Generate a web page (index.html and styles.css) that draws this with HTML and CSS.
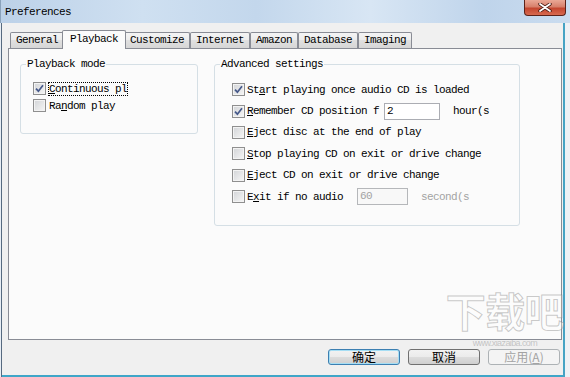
FILE: index.html
```html
<!DOCTYPE html>
<html lang="en">
<head>
  <meta charset="UTF-8" />
  <title>Preferences</title>
  <link rel="stylesheet" href="styles.css">
</head>
<body>
  <div class="window">
    <div class="titlebar">
      <span class="title">Preferences</span>
      <span class="close">
        <svg width="14" height="9" viewBox="0 0 14 9">
          <path d="M2 1 L12 8 M12 1 L2 8" stroke="#4a1a12" stroke-width="3.4" stroke-linecap="round"/>
          <path d="M2 1 L12 8 M12 1 L2 8" stroke="#fff" stroke-width="1.8" stroke-linecap="round"/>
        </svg>
      </span>
    </div>

    <div class="client">
      <div class="tabs">
        <span class="tab">General</span>
        <span class="tab active">Playback</span>
        <span class="tab">Customize</span>
        <span class="tab">Internet</span>
        <span class="tab">Amazon</span>
        <span class="tab">Database</span>
        <span class="tab">Imaging</span>
      </div>

      <div class="panel">
        <fieldset class="group mode">
          <legend>Playback mode</legend>
          <div class="row">
            <span class="cb on"><svg width="9" height="9" viewBox="0 0 9 9"><path d="M1 4.6 L3.4 7.2 L8 1.2" fill="none" stroke="#46598a" stroke-width="1.7"/></svg></span>
            <span class="lbl focus"><u>C</u>ontinuous pl</span>
          </div>
          <div class="row">
            <span class="cb"></span>
            <span class="lbl">Ra<u>n</u>dom play</span>
          </div>
        </fieldset>

        <fieldset class="group advanced">
          <legend>Advanced settings</legend>
          <div class="row">
            <span class="cb on"><svg width="9" height="9" viewBox="0 0 9 9"><path d="M1 4.6 L3.4 7.2 L8 1.2" fill="none" stroke="#46598a" stroke-width="1.7"/></svg></span>
            <span class="lbl">St<u>a</u>rt playing once audio CD is loaded</span>
          </div>
          <div class="row">
            <span class="cb on"><svg width="9" height="9" viewBox="0 0 9 9"><path d="M1 4.6 L3.4 7.2 L8 1.2" fill="none" stroke="#46598a" stroke-width="1.7"/></svg></span>
            <span class="lbl"><u>R</u>emember CD position f</span>
            <span class="field hours">2</span>
            <span class="unit">hour(s</span>
          </div>
          <div class="row">
            <span class="cb"></span>
            <span class="lbl"><u>E</u>ject disc at the end of play</span>
          </div>
          <div class="row">
            <span class="cb"></span>
            <span class="lbl"><u>S</u>top playing CD on exit or drive change</span>
          </div>
          <div class="row">
            <span class="cb"></span>
            <span class="lbl"><u>E</u>ject CD on exit or drive change</span>
          </div>
          <div class="row">
            <span class="cb"></span>
            <span class="lbl">E<u>x</u>it if no audio</span>
            <span class="field seconds disabled">60</span>
            <span class="unit disabled">second(s</span>
          </div>
        </fieldset>
      </div>

      <div class="buttons">
        <span class="btn default">确定</span>
        <span class="btn">取消</span>
        <span class="btn disabled">应用(<u>A</u>)</span>
      </div>
    </div>

    <div class="watermark">下载吧<small>www.xiazaiba.com</small></div>
  </div>
</body>
</html>
```

FILE: styles.css
```css
* {
  box-sizing: border-box;
}

body {
  margin: 0;
  font-family: "Liberation Mono", "DejaVu Sans Mono", monospace;
  font-size: 11px;
  letter-spacing: -0.6px;
  color: #000;
  background: #f0f0f0;
}

.window {
  width: 570px;
  height: 377px;
  position: relative;
  overflow: hidden;
  display: flex;
  flex-direction: column;
}

/* title bar */
.titlebar {
  height: 23px;
  display: flex;
  align-items: flex-start;
  justify-content: space-between;
  background: linear-gradient(90deg, #bcd1e8, #cfe0f1 25%, #c3d7ec 45%, #d8e6f4 65%, #bfd4eb 85%, #cadcef);
  box-shadow: inset 1px 0 #8aa2bb;
}

.title {
  margin: 6px 0 0 5px;
  line-height: 12px;
}

.close {
  width: 42px;
  height: 16px;
  margin-right: 4px;
  border: 1px solid #5c2219;
  border-top: none;
  border-radius: 0 0 4px 4px;
  background: linear-gradient(#eaa896, #d7806b 45%, #c4462f 55%, #d76a50);
  display: flex;
  align-items: center;
  justify-content: center;
}

/* client area */
.client {
  flex: 1;
  padding: 7px 0 0 8px;
  box-shadow: inset 1px 0 #e8eef5, inset 2px 0 #566a80, inset -5px 0 #eef1f5, inset -7px 0 #46a3c4, inset 0 -2px #3fa6c8;
}

.tabs {
  display: flex;
  align-items: flex-end;
  height: 18px;
  padding-left: 2px;
}

.tab {
  height: 16px;
  padding: 0 5px;
  border: 1px solid #898c95;
  border-bottom: none;
  border-radius: 2px 2px 0 0;
  background: linear-gradient(#f4f4f4, #ececec 50%, #e0e0e0 50%, #d6d6d6);
  line-height: 15px;
  white-space: nowrap;
}

.tab.active {
  height: 19px;
  margin: 0 -2px -1px;
  padding: 0 7px;
  background: #fbfbfb;
  position: relative;
  z-index: 1;
  line-height: 17px;
}

.panel {
  width: 554px;
  height: 292px;
  border: 1px solid #898c95;
  background: #fbfbfb;
  display: flex;
  align-items: flex-start;
  gap: 16px;
  padding: 8px 0 0 11px;
}

/* group boxes */
.group {
  margin: 0;
  min-width: 0;
  border: 1px solid #d5dfe5;
  border-radius: 3px;
}

.group legend {
  padding: 0 1px;
  line-height: 14px;
}

.mode {
  width: 178px;
  height: 77px;
  padding: 9px 0 0 12px;
}

.mode legend {
  margin-left: -7px;
}

.advanced {
  width: 306px;
  height: 169px;
  padding: 8px 0 0 17px;
}

.advanced legend {
  margin-left: -12px;
}

.row {
  display: flex;
  align-items: center;
  white-space: nowrap;
}

.mode .row {
  height: 17px;
}

.advanced .row {
  height: 21.4px;
}

.cb {
  width: 13px;
  height: 13px;
  flex: none;
  margin-right: 1px;
  border: 1px solid #8f8f8f;
  background: linear-gradient(135deg, #d2d4d7, #f6f6f6);
  box-shadow: inset 0 0 0 1px #f3f3f3;
  display: flex;
  align-items: center;
  justify-content: center;
}

.mode .cb {
  margin-right: 2px;
}

.lbl {
  border: 1px dotted transparent;
  line-height: 12px;
}

.lbl.focus {
  border-color: #000;
}

.field {
  height: 17px;
  border: 1px solid #abadb3;
  background: #fff;
  padding: 0 2px;
  line-height: 15px;
}

.hours {
  width: 56px;
  margin-left: 4px;
}

.seconds {
  width: 51px;
  margin-left: 13px;
}

.unit {
  margin-left: 13px;
}

.field.disabled {
  border-color: #b5b7ba;
  background: #f8f8f8;
  color: #a3a3a3;
}

.unit.disabled {
  color: #a3a3a3;
}

/* dialog buttons */
.buttons {
  width: 554px;
  margin-top: 9px;
  padding-right: 2px;
  display: flex;
  justify-content: flex-end;
  gap: 8px;
}

.btn {
  width: 72px;
  height: 16px;
  border: 1px solid #707070;
  border-radius: 3px;
  background: linear-gradient(#f2f2f2, #ebebeb 50%, #dddddd 50%, #cfcfcf);
  font-family: "Noto Sans CJK SC", sans-serif;
  font-size: 12px;
  letter-spacing: 0;
  line-height: 1;
  display: flex;
  align-items: center;
  justify-content: center;
}

.btn.default {
  border-color: #3c7fb1;
  box-shadow: inset 0 0 0 1px #a6def4;
}

.btn.disabled {
  border-color: #adb2b5;
  background: #f4f4f4;
  color: #a3a3a3;
}

/* site watermark, kept clear of the button captions */
.watermark {
  position: absolute;
  right: 6px;
  top: 281px;
  font-family: "Noto Sans CJK SC", sans-serif;
  font-size: 40px;
  font-weight: 700;
  line-height: 58px;
  color: rgba(255, 255, 255, 0.3);
  -webkit-text-stroke: 1px rgba(120, 120, 120, 0.4);
  text-align: center;
  pointer-events: none;
}

.watermark small {
  display: block;
  font-family: "Liberation Sans", sans-serif;
  font-size: 9px;
  font-weight: 400;
  line-height: 9px;
  color: rgba(150, 150, 150, 0.5);
  -webkit-text-stroke: 0;
}
```
